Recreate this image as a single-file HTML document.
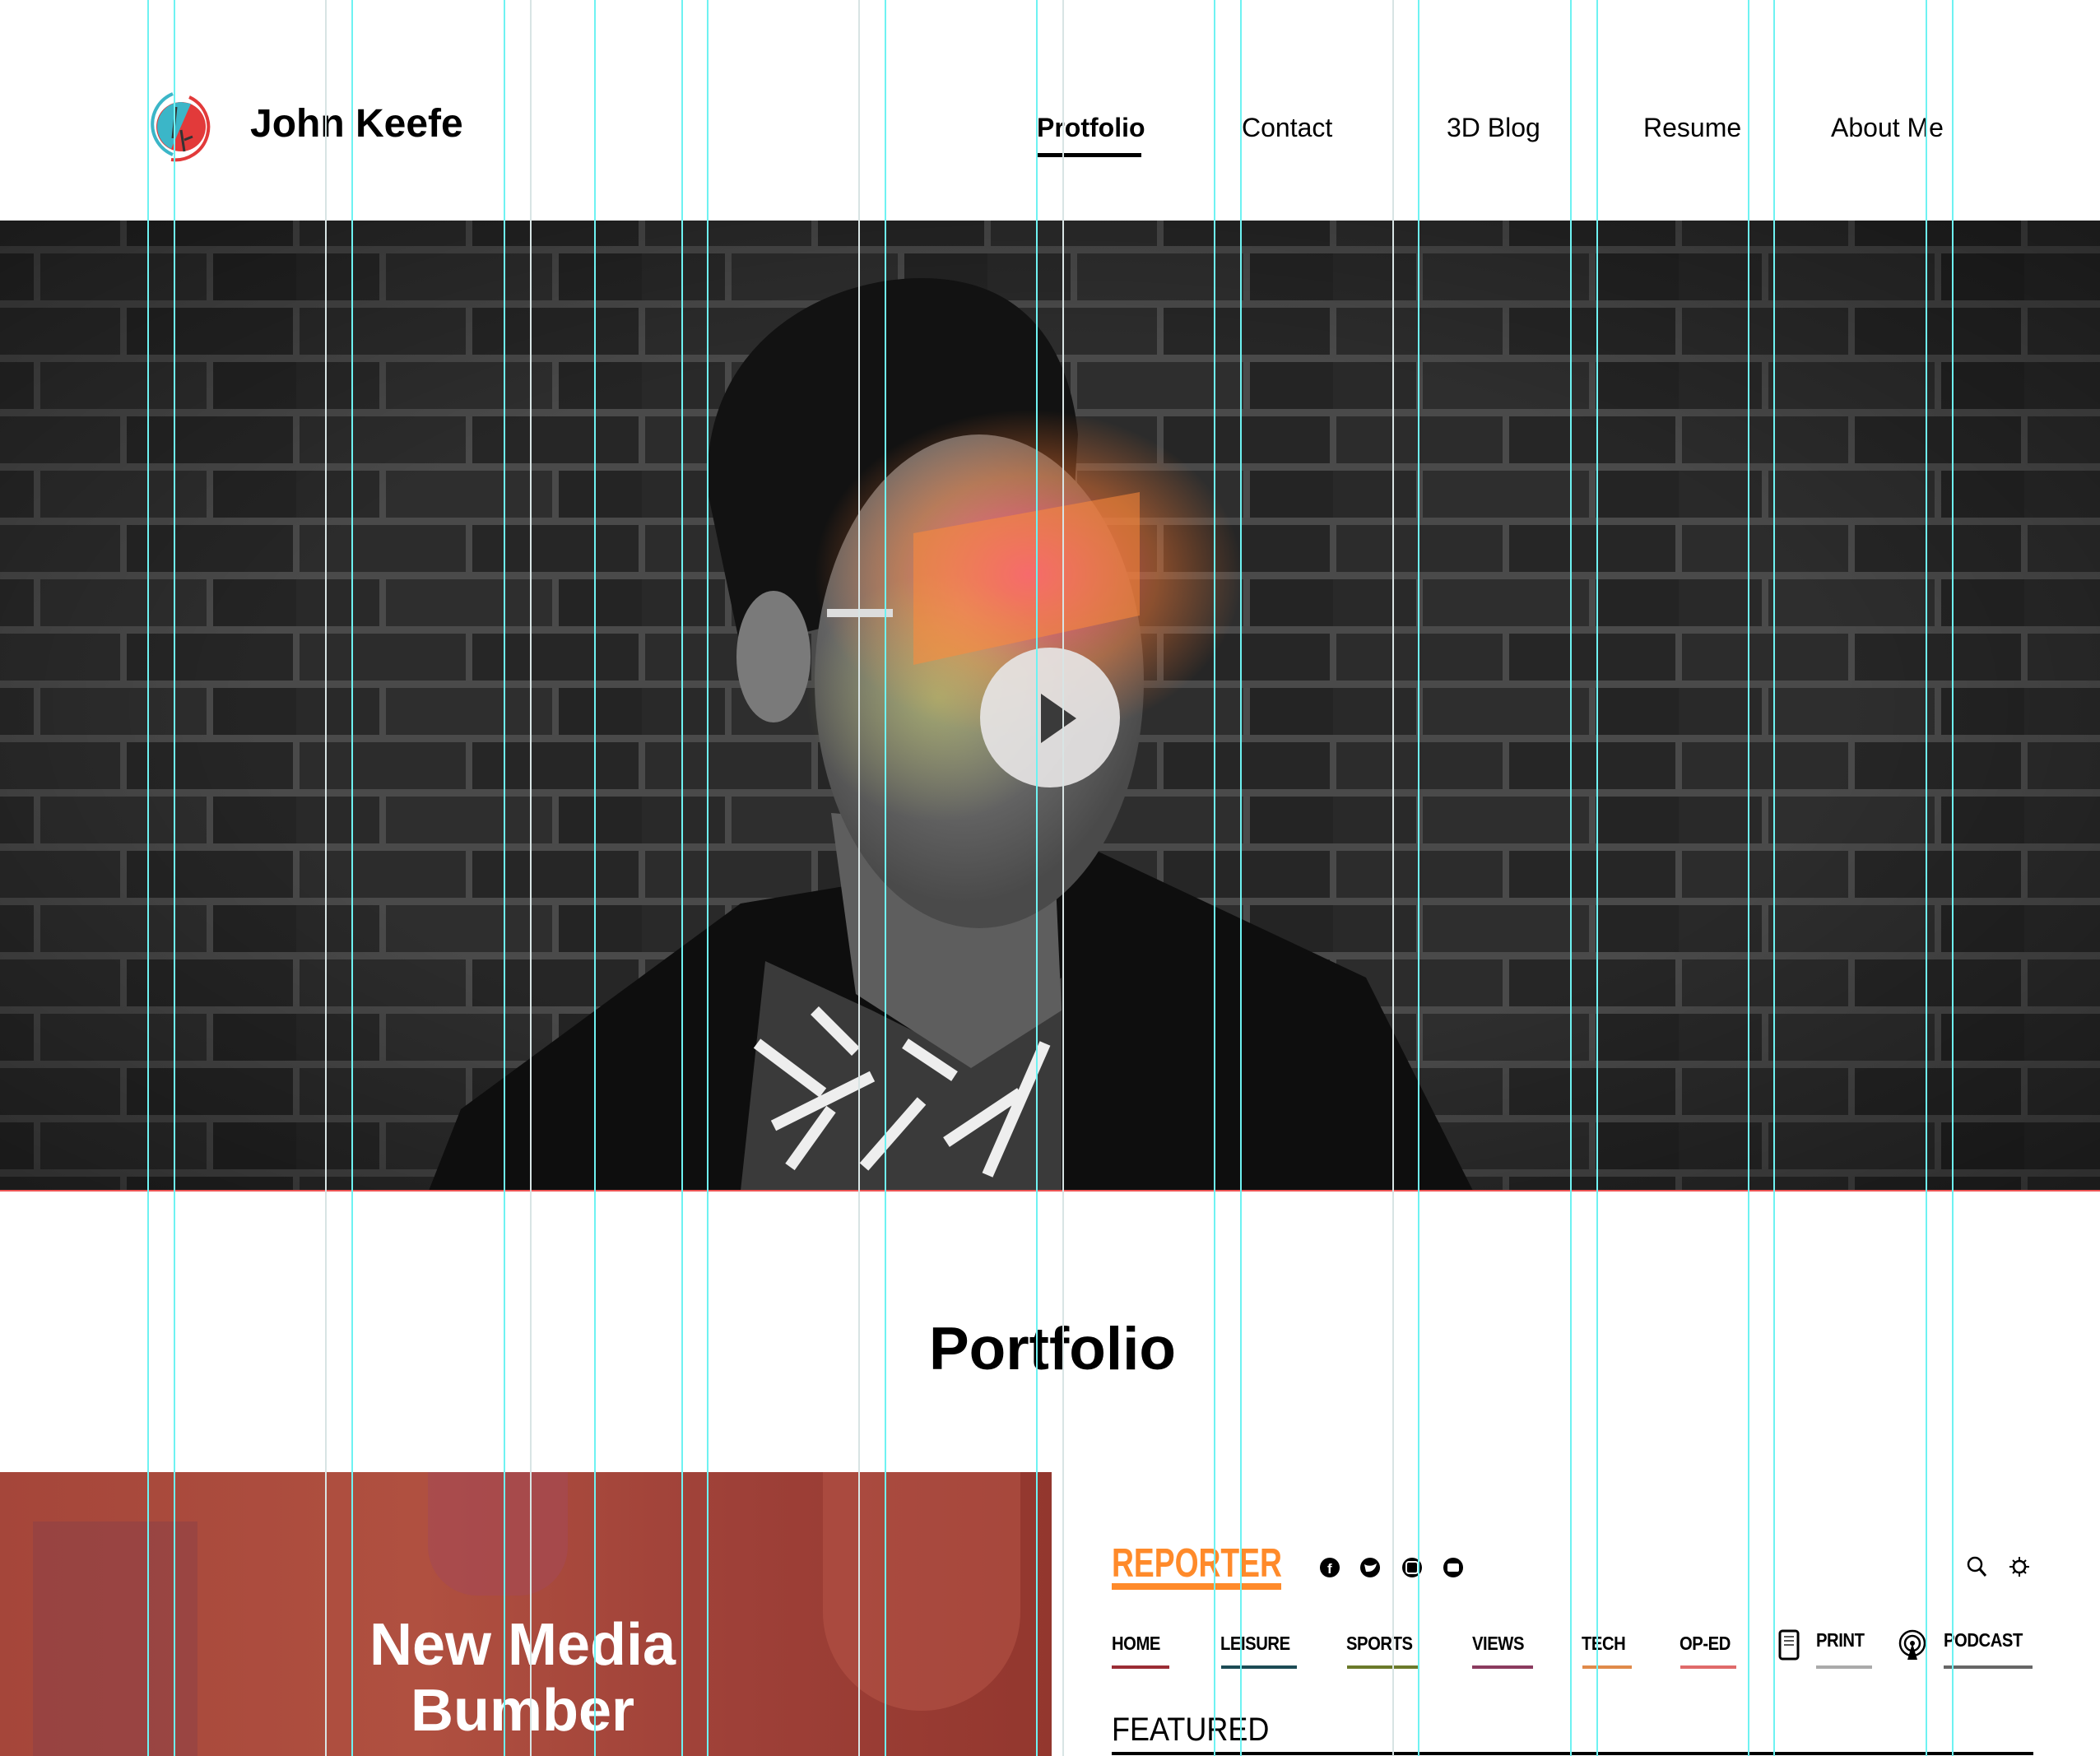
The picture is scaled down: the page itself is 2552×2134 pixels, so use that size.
<!DOCTYPE html>
<html><head><meta charset="utf-8"><style>
*{margin:0;padding:0;box-sizing:border-box}
body{width:2552px;height:2134px;overflow:hidden;background:#fff;position:relative;font-family:"Liberation Sans",sans-serif;color:#000}
.abs{position:absolute}
.nav{position:absolute;top:137px;font-size:32px;white-space:nowrap}
.guide{position:absolute;top:0;width:2px;height:2134px;background:#6ef2f2;z-index:50}
.guide.g{background:#d8e4e4}
.rn{position:absolute;top:1984px;font-size:23px;font-weight:bold;transform:scaleX(.88);transform-origin:left;letter-spacing:-0.5px}
.ul{position:absolute;top:2024px;height:4px}
</style></head><body>

<!-- header -->
<svg class="abs" style="left:180px;top:108px" width="84" height="90" viewBox="0 0 84 90">
<path d="M30 6 A40 40 0 0 0 30 80" stroke="#3bb6c8" stroke-width="4" fill="none"/>
<path d="M50 10 A40 40 0 0 1 28 86" stroke="#e23a3a" stroke-width="4" fill="none"/>
<circle cx="40" cy="46" r="30" fill="#e23a3a"/>
<path d="M40 16 A30 30 0 0 0 28 73 L52 18 Z" fill="#3bb6c8"/>
<path d="M34 22 L30 60 M40 50 L44 76 M44 62 L54 58" stroke="#333" stroke-width="3" fill="none"/>
</svg>
<div class="abs" style="left:304px;top:123px;font-size:48px;font-weight:bold">John Keefe</div>
<div class="nav" style="left:1260px;font-weight:bold">Protfolio</div>
<div class="abs" style="left:1260px;top:186px;width:127px;height:5px;background:#000"></div>
<div class="nav" style="left:1509px">Contact</div>
<div class="nav" style="left:1758px">3D Blog</div>
<div class="nav" style="left:1997px">Resume</div>
<div class="nav" style="left:2225px">About Me</div>

<!-- hero -->
<svg class="abs" style="left:0;top:268px" width="2552" height="1179" viewBox="0 0 2552 1179">
<defs>
<pattern id="br" width="420" height="132" patternUnits="userSpaceOnUse" x="-60" y="-30">
<rect width="420" height="132" fill="#4a4a4a"/>
<rect x="4" y="4" width="202" height="57" fill="#2c2c2c"/>
<rect x="214" y="4" width="202" height="57" fill="#262626"/>
<rect x="-101" y="70" width="202" height="57" fill="#292929"/>
<rect x="109" y="70" width="202" height="57" fill="#2e2e2e"/>
<rect x="319" y="70" width="202" height="57" fill="#242424"/>
</pattern>
<radialGradient id="vg" cx=".5" cy=".5" r=".75"><stop offset=".5" stop-color="#000" stop-opacity="0"/><stop offset="1" stop-color="#000" stop-opacity=".45"/></radialGradient>
<radialGradient id="face" cx=".45" cy=".35" r=".6"><stop offset="0" stop-color="#9a9a9a"/><stop offset="1" stop-color="#4a4a4a"/></radialGradient>
<radialGradient id="glow1" cx=".5" cy=".5" r=".5"><stop offset="0" stop-color="#ff3ab0" stop-opacity=".85"/><stop offset=".6" stop-color="#ff7a30" stop-opacity=".45"/><stop offset="1" stop-color="#ff7a30" stop-opacity="0"/></radialGradient>
<radialGradient id="glow2" cx=".5" cy=".5" r=".5"><stop offset="0" stop-color="#c8d060" stop-opacity=".5"/><stop offset="1" stop-color="#c8d060" stop-opacity="0"/></radialGradient>
</defs>
<rect width="2552" height="1179" fill="url(#br)"/>
<rect width="2552" height="1179" fill="url(#vg)"/>
<!-- body -->
<path d="M521 1179 L560 1080 L900 830 L1320 760 L1660 920 L1790 1179 Z" fill="#0e0e0e"/>
<!-- shirt -->
<path d="M900 1179 L930 900 L1060 960 L1180 1020 L1290 920 L1290 1179 Z" fill="#3a3a3a"/>
<path d="M920 1000 L1000 1060 M940 1100 L1060 1040 M1050 1150 L1120 1070 M1150 1120 L1240 1060 M1200 1160 L1270 1000 M960 1150 L1010 1080 M1100 1000 L1160 1040 M990 960 L1040 1010" stroke="#eee" stroke-width="14"/>
<!-- neck -->
<path d="M1010 720 L1280 740 L1290 960 L1180 1030 L1040 940 Z" fill="#5e5e5e"/>
<!-- hair/head -->
<path d="M860 330 C850 150 1000 70 1120 70 C1250 70 1300 160 1310 260 L1300 420 L900 520 Z" fill="#121212"/>
<ellipse cx="1190" cy="560" rx="200" ry="300" fill="url(#face)"/>
<ellipse cx="940" cy="530" rx="45" ry="80" fill="#7a7a7a"/>
<ellipse cx="1250" cy="430" rx="260" ry="200" fill="url(#glow1)"/>
<ellipse cx="1140" cy="580" rx="160" ry="150" fill="url(#glow2)"/>
<polygon points="1110,380 1385,330 1385,480 1110,540" fill="#ff8a3a" opacity=".55"/>
<rect x="1005" y="472" width="80" height="10" fill="#ddd"/>
<!-- play -->
<circle cx="1276" cy="604" r="85" fill="#e6e4e4" opacity=".92"/>
<polygon points="1265,575 1265,635 1308,605" fill="#3a3a3a"/>
</svg>
<div class="abs" style="left:0;top:1446px;width:2552px;height:2px;background:#e55"></div>

<!-- portfolio -->
<div class="abs" style="left:0;width:2558px;top:1598px;text-align:center;font-size:73px;font-weight:bold">Portfolio</div>

<div class="abs" style="left:0;top:1789px;width:1278px;height:345px;background:linear-gradient(90deg,#a5463a,#b05040 40%,#9e4038 70%,#93372e);overflow:hidden">
<div class="abs" style="left:40px;top:60px;width:200px;height:290px;background:#8a4048;opacity:.5"></div>
<div class="abs" style="left:1000px;top:0;width:240px;height:290px;border-radius:0 0 120px 120px;background:#b9584a;opacity:.5"></div>
<div class="abs" style="left:520px;top:0;width:170px;height:150px;border-radius:0 0 60px 60px;background:#a54a55;opacity:.6"></div>
<div class="abs" style="left:0;width:1270px;top:170px;text-align:center;color:#fff;font-size:72px;font-weight:bold;line-height:80px">New Media<br>Bumber</div>
</div>

<!-- reporter -->
<div class="abs" style="left:1351px;top:1872px;font-size:49px;font-weight:bold;color:#ff8a2a;transform:scaleX(.76);transform-origin:left">REPORTER</div>
<div class="abs" style="left:1351px;top:1924px;width:206px;height:8px;background:#ff8a2a"></div>
<svg class="abs" style="left:1603px;top:1891px" width="180" height="28">
<circle cx="13" cy="14" r="12"/><circle cx="62" cy="14" r="12"/><circle cx="113" cy="14" r="12"/><circle cx="163" cy="14" r="12"/>
<text x="10" y="21" fill="#fff" font-size="17" font-weight="bold" font-family="Liberation Sans">f</text>
<path d="M55 10 Q62 14 70 9 Q68 20 57 19" fill="#fff"/>
<rect x="106" y="7" width="14" height="14" rx="3" fill="none" stroke="#fff" stroke-width="2"/><rect x="156" y="9" width="14" height="10" rx="2" fill="#fff"/>
</svg>
<svg class="abs" style="left:2388px;top:1890px" width="84" height="30">
<circle cx="12" cy="11" r="8" fill="none" stroke="#000" stroke-width="2.5"/><path d="M18 17 L25 25" stroke="#000" stroke-width="3"/>
<path d="M66 2 V26 M54 14 H78 M58 6 L74 22 M74 6 L58 22" stroke="#000" stroke-width="2"/><circle cx="66" cy="14" r="6" fill="#fff"/><circle cx="66" cy="14" r="7" fill="none" stroke="#000" stroke-width="2.5"/>
</svg>
<div class="rn" style="left:1351px">HOME</div><div class="ul" style="left:1351px;width:70px;background:#9b2c35"></div>
<div class="rn" style="left:1483px">LEISURE</div><div class="ul" style="left:1484px;width:92px;background:#1c4b55"></div>
<div class="rn" style="left:1636px">SPORTS</div><div class="ul" style="left:1637px;width:88px;background:#6b7a2a"></div>
<div class="rn" style="left:1789px">VIEWS</div><div class="ul" style="left:1789px;width:74px;background:#8b3a5e"></div>
<div class="rn" style="left:1922px">TECH</div><div class="ul" style="left:1923px;width:60px;background:#e08a4a"></div>
<div class="rn" style="left:2041px">OP-ED</div><div class="ul" style="left:2042px;width:68px;background:#e06a6a"></div>
<svg class="abs" style="left:2160px;top:1980px" width="30" height="40"><rect x="3" y="2" width="22" height="34" rx="3" fill="none" stroke="#000" stroke-width="3"/><path d="M8 9 H20 M8 14 H20 M8 19 H20" stroke="#555" stroke-width="2"/></svg>
<div class="rn" style="left:2207px;top:1980px">PRINT</div><div class="ul" style="left:2207px;width:68px;background:#aaa"></div>
<svg class="abs" style="left:2305px;top:1979px" width="38" height="42"><circle cx="19" cy="18" r="15" fill="none" stroke="#000" stroke-width="2.5"/><circle cx="19" cy="18" r="9" fill="none" stroke="#000" stroke-width="2.5"/><circle cx="19" cy="18" r="3"/><path d="M19 18 L13 38 H25 Z"/></svg>
<div class="rn" style="left:2362px;top:1980px">PODCAST</div><div class="ul" style="left:2362px;width:108px;background:#666"></div>
<div class="abs" style="left:1351px;top:2080px;font-size:40px;transform:scaleX(.9);transform-origin:left">FEATURED</div>
<div class="abs" style="left:1351px;top:2129px;width:1120px;height:4px;background:#000"></div>

<!-- guides -->
<div class="guide" style="left:179px"></div><div class="guide" style="left:211px"></div>
<div class="guide g" style="left:395px"></div><div class="guide" style="left:427px"></div>
<div class="guide" style="left:612px"></div><div class="guide g" style="left:644px"></div>
<div class="guide" style="left:722px"></div>
<div class="guide" style="left:828px"></div><div class="guide" style="left:859px"></div>
<div class="guide g" style="left:1043px"></div><div class="guide" style="left:1075px"></div>
<div class="guide" style="left:1259px"></div><div class="guide g" style="left:1291px"></div>
<div class="guide" style="left:1475px"></div><div class="guide" style="left:1507px"></div>
<div class="guide g" style="left:1692px"></div><div class="guide" style="left:1723px"></div>
<div class="guide" style="left:1908px"></div><div class="guide" style="left:1940px"></div>
<div class="guide" style="left:2124px"></div><div class="guide" style="left:2155px"></div>
<div class="guide" style="left:2340px"></div><div class="guide" style="left:2372px"></div>
</body></html>
